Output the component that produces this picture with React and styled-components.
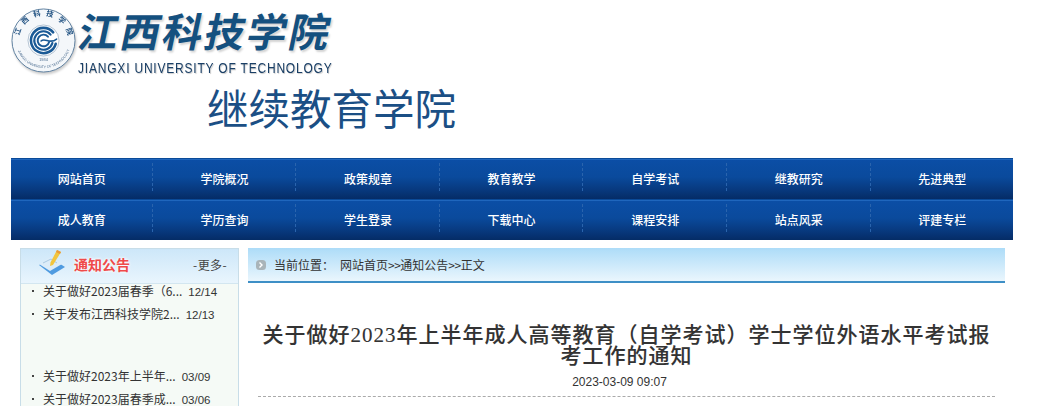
import React from "react";
import styled, { createGlobalStyle } from "styled-components";

const Global = createGlobalStyle`
  *, *::before, *::after { box-sizing: border-box; }
  html, body { margin: 0; padding: 0; background: #fff; overflow: hidden; }
  body { font-family: "Noto Sans CJK SC", "Liberation Sans", sans-serif; font-size: 12px; color: #333; }
`;
const Page = styled.div`width: 1059px; height: 406px; overflow: hidden;`;
const Wrap = styled.div`width: 1002px; margin-left: 11px;`;
const Header = styled.header`height: 158px; display: flex; flex-direction: column;`;
const LogoRow = styled.div`display: flex; height: 82px;`;
const Seal = styled.svg`width: 65px; height: 65px; margin-top: 8px; flex: none; filter: drop-shadow(1px 2px 1px #ccc);`;
const LogoText = styled.div`width: 256px; margin-left: 2px;`;
const SchoolCn = styled.div`
  margin-left: -5px; font-family: "Noto Sans CJK SC", sans-serif; font-weight: 700; font-size: 40px; line-height: 60px; height: 60px;
  color: #14507f; letter-spacing: 2.2px; white-space: nowrap; transform: skewX(-12deg); transform-origin: 0 100%;
  text-shadow: 2px 2px 2px #d4d4d4;
`;
const SchoolEn = styled.div`
  font-family: "Liberation Sans", sans-serif; font-size: 15px; line-height: 15px; color: #1a3f66; white-space: nowrap;
  letter-spacing: 1px; transform: scaleX(0.8); transform-origin: 0 50%; text-shadow: 1px 1px 1px #ccc;
`;
const College = styled.div`
  margin: -1px 0 0 196px; font-size: 41.5px; line-height: 52px; color: #1b4f85; white-space: nowrap;
`;
const Nav = styled.nav`display: flex; flex-direction: column;`;
const NavRow = styled.div`
  display: grid; grid-template-columns: 141.6px repeat(5, 143.6px) 1fr; height: 41px; align-items: center;
  padding-bottom: 4px; border-top: 1px solid #0a4a98; box-shadow: inset 0 1px 0 #1f66bd;
  background: linear-gradient(#0b4ea6 0%, #0a4a9c 45%, #083a80 75%, #052c66 100%);
`;
const NavItem = styled.a`
  height: 28px; line-height: 32px; text-align: center; text-indent: 1px; color: #fff; font-size: 12px; font-weight: 500;
  border-right: ${p => (p.$last ? "none" : "1px dashed #2a64ad")};
`;
const Content = styled.div`display: flex; margin-top: 8px; padding-left: 9px;`;
const Side = styled.aside`width: 219px; height: 200px; border: 1px solid #c8dde8; background: #f5faf6; flex: none;`;
const SideHead = styled.div`
  height: 35px; display: flex; align-items: center; padding: 0 11px 4px 17px;
  background: linear-gradient(#cde7f9, #e9f5fd 100%); border-bottom: 1px solid #d3e6f0;
`;
const NoticeIcon = styled.svg`width: 28px; height: 27px; flex: none; margin-top: -3px;`;
const SideTitle = styled.span`
  margin-left: 8px; font-size: 14px; line-height: 18px; font-weight: 700; color: #ef4a4a; text-shadow: 0 0 3px #fff, 0 0 3px #fff;
`;
const More = styled.span`margin-left: auto; font-size: 12px; letter-spacing: 0.4px; color: #444;`;
const List = styled.ul`list-style: none; margin: 0; padding: 0 0 0 11px;`;
const Item = styled.li`
  display: flex; align-items: baseline; height: 23px; line-height: 13px; margin-top: ${p => p.$gap || 0}px; color: #333; white-space: nowrap;
`;
const Dot = styled.i`
  display: block; width: 2px; height: 2px; margin-right: 9px; background: #444; flex: none; align-self: flex-start; margin-top: 6px;
`;
const ItemDate = styled.span`margin-left: 6px; font-family: "Liberation Sans", sans-serif; font-size: 11.5px;`;
const Main = styled.main`width: 757px; margin-left: 9px; flex: none;`;
const Crumb = styled.div`
  height: 35px; display: flex; align-items: center; padding-left: 8px; color: #333;
  background: linear-gradient(#addcf8, #eaf6fd); border-bottom: 2px solid #3e8fc6;
`;
const CrumbIcon = styled.svg`width: 10px; height: 10px; flex: none;`;
const CrumbLabel = styled.span`margin-left: 8px; width: 66px;`;
const Arrows = styled.span`letter-spacing: -0.5px;`;
const Title = styled.h1`
  margin: 42px 0 0; padding: 0 12px; text-align: center; font-family: "Liberation Serif", "Noto Sans CJK SC", serif;
  font-size: 21px; line-height: 21px; font-weight: 500; letter-spacing: 1px; color: #333; -webkit-text-stroke: 0.1px #333;
`;
const Stamp = styled.div`
  margin-top: 6px; padding-right: 14px; text-align: center; font-family: "Liberation Sans", sans-serif; font-size: 12px; line-height: 18px; color: #333;
`;
const Rule = styled.div`margin: 5px 10px 0; border-top: 1px dashed #aaa;`;

const row1 = ["网站首页", "学院概况", "政策规章", "教育教学", "自学考试", "继教研究", "先进典型"];
const row2 = ["成人教育", "学历查询", "学生登录", "下载中心", "课程安排", "站点风采", "评建专栏"];
const notices = [
  ["关于做好2023届春季（6...", "12/14", 0],
  ["关于发布江西科技学院2...", "12/13", 0],
  ["关于做好2023年上半年...", "03/09", 39],
  ["关于做好2023届春季成...", "03/06", 0],
];

export default function App() {
  return (
    <Page>
      <Global />
      <Wrap>
        <Header>
          <LogoRow>
            <Seal viewBox="0 0 67 67">
              <defs>
                <path id="ring" d="M8 33.5 a25.5 25.5 0 1 1 51 0" />
                <path id="ringB" d="M5 33.5 a28.5 28.5 0 0 0 57 0" />
              </defs>
              <circle cx="33.5" cy="33.5" r="32.5" fill="#f4f7fa" stroke="#5d7f9f" strokeWidth="1" />
              <circle cx="33.5" cy="33.5" r="16" fill="#fff" stroke="#7f9ab3" strokeWidth="0.6" />
              <text fontSize="7.5" fill="#1d4f80" fontFamily="Noto Sans CJK SC" fontWeight="700">
                <textPath href="#ring" startOffset="6%" textLength="70" lengthAdjust="spacing">江西科技学院</textPath>
              </text>
              <text fontSize="3.6" fill="#46688c" fontFamily="Liberation Sans">
                <textPath href="#ringB" startOffset="12%">JIANGXI UNIVERSITY OF TECHNOLOGY</textPath>
              </text>
              <g fill="none" stroke="#1a5a96" strokeLinecap="round">
                <path d="M43.5 25.1 A13 13 0 1 0 46.1 36.9" strokeWidth="2.6" />
                <path d="M40.8 27.4 A9.5 9.5 0 1 0 42.7 36" strokeWidth="2.2" />
                <path d="M38.1 29.6 A6 6 0 1 0 39.3 35" strokeWidth="2" />
                <path d="M31 34 C35 30 40 38 47 32" strokeWidth="1.6" />
              </g>
              <text x="33.5" y="55" fontSize="4" textAnchor="middle" fill="#46688c" fontFamily="Liberation Sans">1984</text>
            </Seal>
            <LogoText>
              <SchoolCn>江西科技学院</SchoolCn>
              <SchoolEn>JIANGXI UNIVERSITY OF TECHNOLOGY</SchoolEn>
            </LogoText>
          </LogoRow>
          <College>继续教育学院</College>
        </Header>
        <Nav>
          {[row1, row2].map((r, i) => (
            <NavRow key={i}>
              {r.map((t, j) => <NavItem key={t} $last={j === 6}>{t}</NavItem>)}
            </NavRow>
          ))}
        </Nav>
        <Content>
          <Side>
            <SideHead>
              <NoticeIcon viewBox="0 0 28 27">
                <path d="M1 16 L13 9 L27 18 L14 26 Z" fill="#4f9be0" />
                <path d="M1 15 L13 8 L24 15 L12 22 Z" fill="#dcecf8" />
                <path d="M5 14 L13 10 L19 14" fill="none" stroke="#a9c9e3" strokeWidth="1" />
                <path d="M19 1 L23 3 L15 16 L12 17 L12.5 13.5 Z" fill="#f2c53d" />
                <path d="M19 1 L23 3 L22 5 L18 3 Z" fill="#e8983a" />
              </NoticeIcon>
              <SideTitle>通知公告</SideTitle>
              <More>-更多-</More>
            </SideHead>
            <List>
              {notices.map(([t, d, gap]) => (
                <Item key={t} $gap={gap}>
                  <Dot />
                  <span>{t}</span>
                  <ItemDate>{d}</ItemDate>
                </Item>
              ))}
            </List>
          </Side>
          <Main>
            <Crumb>
              <CrumbIcon viewBox="0 0 10 10">
                <rect x="0" y="0" width="10" height="10" rx="3.5" fill="#a9b4b9" />
                <path d="M3.5 2.5 L6 5 L3.5 7.5" fill="none" stroke="#fff" strokeWidth="1.4" />
              </CrumbIcon>
              <CrumbLabel>当前位置：</CrumbLabel>
              <span>网站首页<Arrows>&gt;&gt;</Arrows>通知公告<Arrows>&gt;&gt;</Arrows>正文</span>
            </Crumb>
            <Title>关于做好2023年上半年成人高等教育（自学考试）学士学位外语水平考试报考工作的通知</Title>
            <Stamp>2023-03-09 09:07</Stamp>
            <Rule />
          </Main>
        </Content>
      </Wrap>
    </Page>
  );
}
